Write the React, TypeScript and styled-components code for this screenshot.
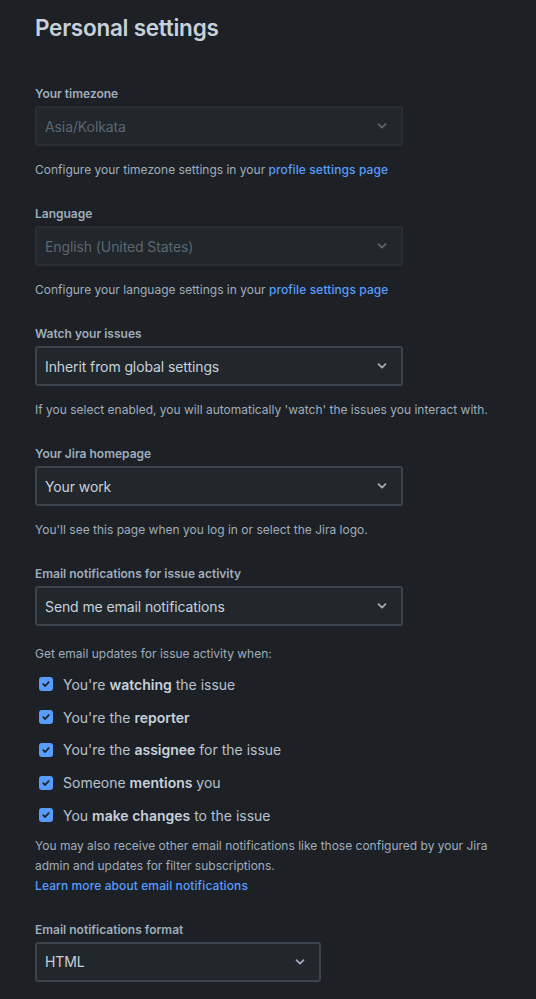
import * as React from 'react';
import styled, {createGlobalStyle} from 'styled-components';

const GlobalStyle = createGlobalStyle`
    html, body {
        margin: 0;
        padding: 0;
        background: #1d2125;
    }
    body {
        font-family: Inter, "Noto Sans", sans-serif;
        color: #b6c2cf;
        -webkit-font-smoothing: antialiased;
    }
`;

const Page = styled.div`
    padding: 14px 35px 20px;
    min-height: 999px;
    box-sizing: border-box;
`;

const Title = styled.h1`
    margin: 0 0 44px;
    font-size: 22.5px;
    line-height: 28px;
    font-weight: 600;
    letter-spacing: -0.25px;
    color: #c7d1db;
`;

const Field = styled.div<{ $after?: number }>`
    display: flex;
    flex-direction: column;
    margin-bottom: ${p => p.$after ?? 28}px;
`;

const Label = styled.label`
    font-size: 12px;
    line-height: 16px;
    font-weight: 600;
    color: #9fadbc;
    margin-bottom: 4px;
`;

const SelectBox = styled.div<{ $disabled?: boolean; $width?: number }>`
    display: flex;
    align-items: center;
    justify-content: space-between;
    box-sizing: border-box;
    width: ${p => p.$width ?? 368}px;
    height: 40px;
    padding: 0 14px 0 8px;
    border-radius: 3px;
    background: #22272b;
    border: 2px solid ${p => (p.$disabled ? '#292f35' : '#3b434c')};
    color: ${p => (p.$disabled ? '#5b6671' : '#c7d1db')};
    font-size: 14px;
    letter-spacing: -0.1px;
`;

const Helper = styled.div<{ $gap?: number }>`
    margin-top: ${p => p.$gap ?? 16}px;
    font-size: 12px;
    line-height: 16px;
    color: #9fadbc;
`;

const Link = styled.a`
    color: #579dff;
    font-weight: 500;
    letter-spacing: 0.1px;
    text-decoration: none;
`;

const CheckList = styled.div`
    display: flex;
    flex-direction: column;
    margin-top: 6px;
`;

const CheckRow = styled.div`
    display: flex;
    align-items: center;
    height: 32.75px;
    padding-left: 4px;
    gap: 10px;
    font-size: 14px;
    color: #b6c2cf;

    b {
        font-weight: 600;
        color: #c7d1db;
    }
`;

const Box = styled.span`
    display: flex;
    align-items: center;
    justify-content: center;
    width: 14px;
    height: 14px;
    border-radius: 3px;
    background: #579dff;
`;

const Note = styled.div`
    margin-top: 4px;
    font-size: 12px;
    line-height: 20px;
    color: #9fadbc;
`;

function Chevron({dim}: { dim?: boolean }) {
    return (
        <svg width="10" height="8" viewBox="0 0 10 8">
            <path d="M1.5 2.2 L5 5.6 L8.5 2.2" fill="none" stroke={dim ? '#5b6671' : '#9fadbc'}
                  strokeWidth="1.8" strokeLinecap="round" strokeLinejoin="round"/>
        </svg>
    );
}

function Select({value, disabled, width}: { value: string; disabled?: boolean; width?: number }) {
    return (
        <SelectBox $disabled={disabled} $width={width}>
            <span>{value}</span>
            <Chevron dim={disabled}/>
        </SelectBox>
    );
}

function Check({children}: { children: React.ReactNode }) {
    return (
        <CheckRow>
            <Box>
                <svg width="10" height="10" viewBox="0 0 10 10">
                    <path d="M2.3 5.2 L4.2 7 L7.7 3.2" fill="none" stroke="#1d2125" strokeWidth="1.8"
                          strokeLinecap="round" strokeLinejoin="round"/>
                </svg>
            </Box>
            <span>{children}</span>
        </CheckRow>
    );
}

export default function App() {
    return (
        <>
            <GlobalStyle/>
            <Page>
                <Title>Personal settings</Title>
                <Field>
                    <Label>Your timezone</Label>
                    <Select value="Asia/Kolkata" disabled/>
                    <Helper>Configure your timezone settings in your <Link>profile settings page</Link></Helper>
                </Field>
                <Field>
                    <Label>Language</Label>
                    <Select value="English (United States)" disabled/>
                    <Helper>Configure your language settings in your <Link>profile settings page</Link></Helper>
                </Field>
                <Field>
                    <Label>Watch your issues</Label>
                    <Select value="Inherit from global settings"/>
                    <Helper>If you select enabled, you will automatically 'watch' the issues you interact with.</Helper>
                </Field>
                <Field>
                    <Label>Your Jira homepage</Label>
                    <Select value="Your work"/>
                    <Helper>You'll see this page when you log in or select the Jira logo.</Helper>
                </Field>
                <Field $after={26}>
                    <Label>Email notifications for issue activity</Label>
                    <Select value="Send me email notifications"/>
                    <Helper $gap={20}>Get email updates for issue activity when:</Helper>
                    <CheckList>
                        <Check>You're <b>watching</b> the issue</Check>
                        <Check>You're the <b>reporter</b></Check>
                        <Check>You're the <b>assignee</b> for the issue</Check>
                        <Check>Someone <b>mentions</b> you</Check>
                        <Check>You <b>make changes</b> to the issue</Check>
                    </CheckList>
                    <Note>
                        You may also receive other email notifications like those configured by your Jira admin and
                        updates for filter subscriptions.
                        <br/>
                        <Link>Learn more about email notifications</Link>
                    </Note>
                </Field>
                <Field>
                    <Label>Email notifications format</Label>
                    <Select value="HTML" width={286}/>
                </Field>
            </Page>
        </>
    );
}
